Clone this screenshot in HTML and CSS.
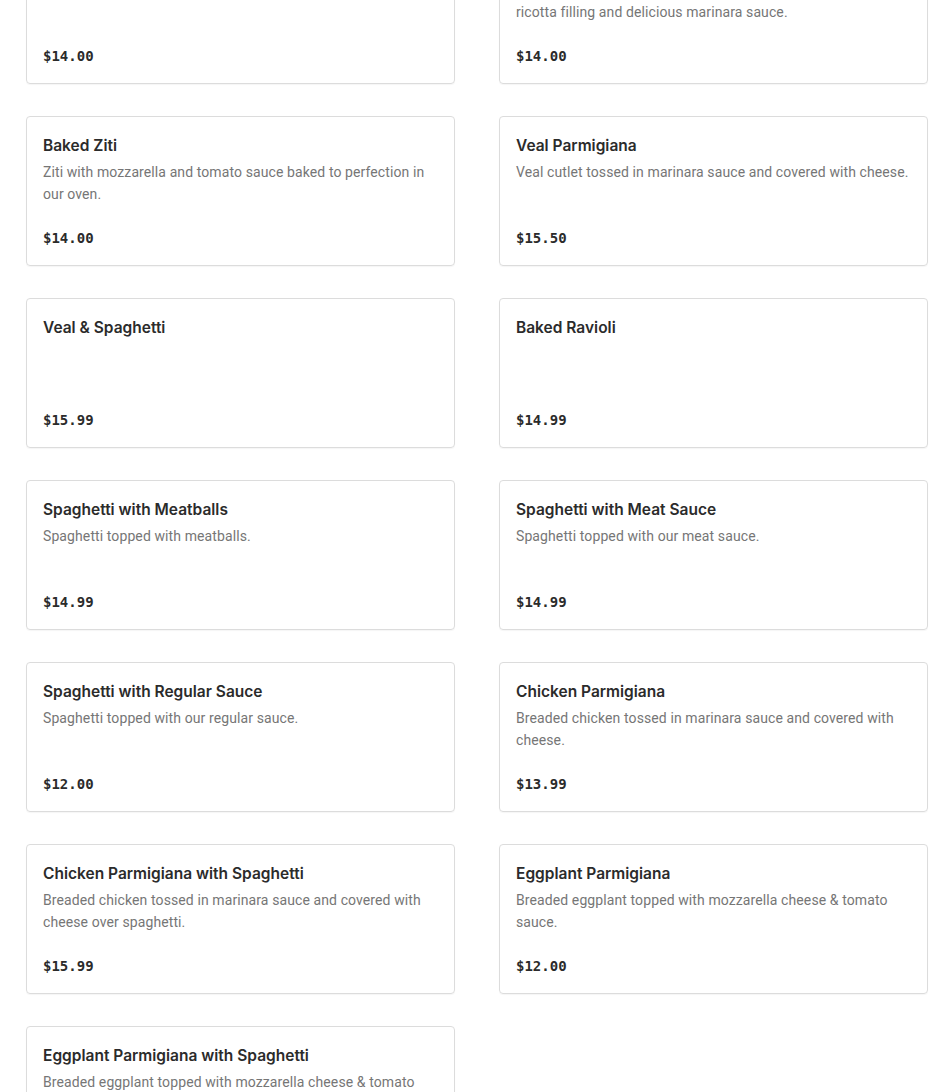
FILE: index.html
```html
<!DOCTYPE html>
<html lang="en">
<head>
<meta charset="utf-8">
<title>Menu</title>
<link rel="stylesheet" href="styles.css">
</head>
<body>
<main class="menu-grid">
  <article class="card">
    <h3 class="card-title">Lasagna</h3>
    <p class="card-desc">Layers of pasta, ricotta, mozzarella and meat sauce.</p>
    <div class="card-price">$14.00</div>
  </article>
  <article class="card">
    <h3 class="card-title">Stuffed Shells</h3>
    <p class="card-desc">Jumbo pasta shells stuffed with a rich and creamy homemade ricotta filling and delicious marinara sauce.</p>
    <div class="card-price">$14.00</div>
  </article>
  <article class="card">
    <h3 class="card-title">Baked Ziti</h3>
    <p class="card-desc">Ziti with mozzarella and tomato sauce baked to perfection in our oven.</p>
    <div class="card-price">$14.00</div>
  </article>
  <article class="card">
    <h3 class="card-title">Veal Parmigiana</h3>
    <p class="card-desc">Veal cutlet tossed in marinara sauce and covered with cheese.</p>
    <div class="card-price">$15.50</div>
  </article>
  <article class="card">
    <h3 class="card-title">Veal &amp; Spaghetti</h3>
    <div class="card-price">$15.99</div>
  </article>
  <article class="card">
    <h3 class="card-title">Baked Ravioli</h3>
    <div class="card-price">$14.99</div>
  </article>
  <article class="card">
    <h3 class="card-title">Spaghetti with Meatballs</h3>
    <p class="card-desc">Spaghetti topped with meatballs.</p>
    <div class="card-price">$14.99</div>
  </article>
  <article class="card">
    <h3 class="card-title">Spaghetti with Meat Sauce</h3>
    <p class="card-desc">Spaghetti topped with our meat sauce.</p>
    <div class="card-price">$14.99</div>
  </article>
  <article class="card">
    <h3 class="card-title">Spaghetti with Regular Sauce</h3>
    <p class="card-desc">Spaghetti topped with our regular sauce.</p>
    <div class="card-price">$12.00</div>
  </article>
  <article class="card">
    <h3 class="card-title">Chicken Parmigiana</h3>
    <p class="card-desc">Breaded chicken tossed in marinara sauce and covered with cheese.</p>
    <div class="card-price">$13.99</div>
  </article>
  <article class="card">
    <h3 class="card-title">Chicken Parmigiana with Spaghetti</h3>
    <p class="card-desc">Breaded chicken tossed in marinara sauce and covered with cheese over spaghetti.</p>
    <div class="card-price">$15.99</div>
  </article>
  <article class="card">
    <h3 class="card-title">Eggplant Parmigiana</h3>
    <p class="card-desc">Breaded eggplant topped with mozzarella cheese &amp; tomato sauce.</p>
    <div class="card-price">$12.00</div>
  </article>
  <article class="card">
    <h3 class="card-title">Eggplant Parmigiana with Spaghetti</h3>
    <p class="card-desc">Breaded eggplant topped with mozzarella cheese &amp; tomato sauce over spaghetti.</p>
    <div class="card-price">$15.99</div>
  </article>
</main>
</body>
</html>
```

FILE: styles.css
```css
html, body {
  margin: 0;
  padding: 0;
  background: #ffffff;
}

body {
  font-family: "Inter", "Liberation Sans", sans-serif;
  color: #2b2b2b;
  overflow: hidden;
  height: 1092px;
}

.menu-grid {
  display: grid;
  grid-template-columns: 429px 429px;
  column-gap: 44px;
  row-gap: 32px;
  margin: -66px 0 0 26px;
}

.card {
  box-sizing: border-box;
  height: 150px;
  border: 1px solid #dcdcdc;
  border-radius: 4px;
  padding: 16px 16px 17px 16px;
  display: flex;
  flex-direction: column;
  box-shadow: 0 1px 1px rgba(0, 0, 0, 0.04);
}

.card-title {
  margin: 0;
  font-size: 15.5px;
  line-height: 25px;
  font-weight: 600;
  color: #2b2b2b;
}

.card-desc {
  margin: 3px 0 0;
  font-family: "Roboto", "Inter", sans-serif;
  font-size: 14px;
  line-height: 22px;
  letter-spacing: 0.1px;
  color: #767676;
}

.card-price {
  margin-top: auto;
  font-family: "DejaVu Sans Mono", "Liberation Mono", monospace;
  font-size: 14px;
  line-height: 20px;
  font-weight: 600;
  color: #2b2b2b;
}
```
